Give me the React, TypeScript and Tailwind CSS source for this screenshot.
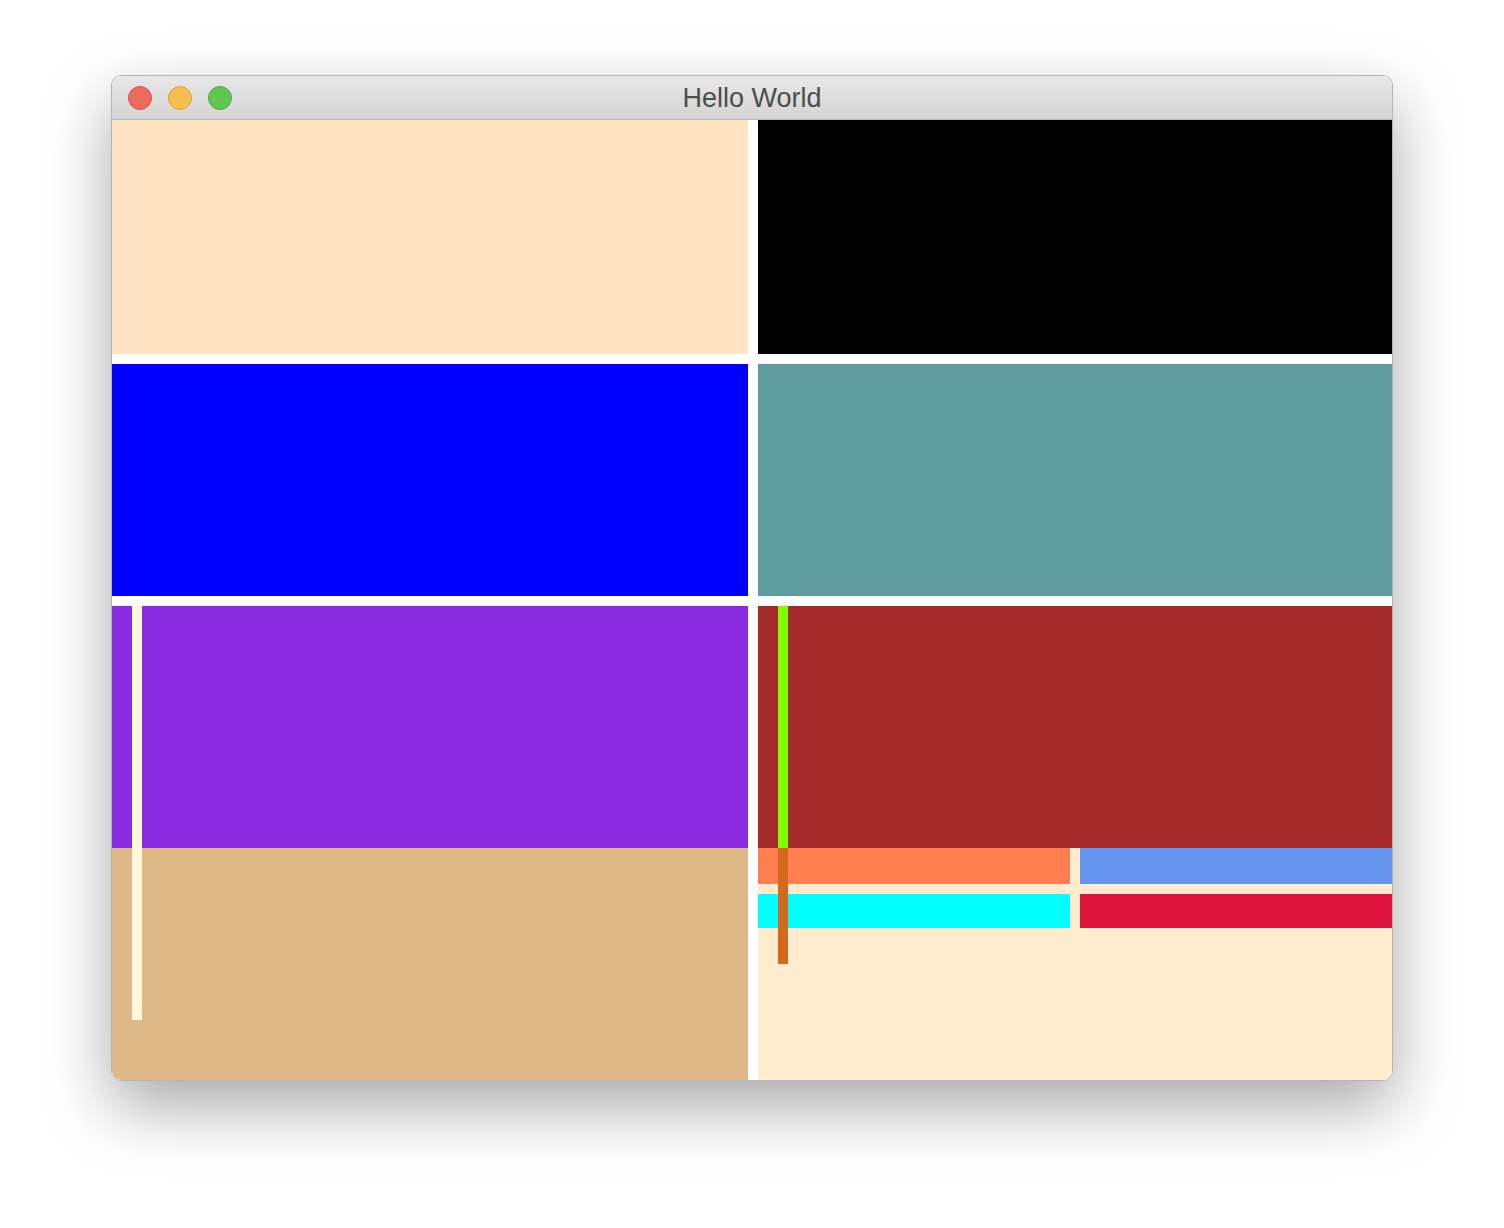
export default function App() {
  return (
    <div className="min-h-screen bg-white pt-[75px] pl-[111px] font-['Liberation_Sans',Arial,sans-serif]">
      <div className="w-[1282px] overflow-hidden rounded-[10px] border border-[#b5b5b5] shadow-[0_26px_64px_rgba(0,0,0,0.34)]">
        {/* title bar */}
        <div className="relative flex h-[44px] items-center border-b border-[#b8b8b8] bg-gradient-to-b from-[#e8e8e8] to-[#d4d4d4]">
          <div className="flex items-center gap-[16px] pl-[16px]">
            <span className="h-[24px] w-[24px] rounded-full border border-[#d9534a] bg-[#ee6a5f]" />
            <span className="h-[24px] w-[24px] rounded-full border border-[#dba33a] bg-[#f6be4f]" />
            <span className="h-[24px] w-[24px] rounded-full border border-[#4ea83f] bg-[#62c655]" />
          </div>
          <div className="absolute inset-0 flex items-center justify-center pt-[2px] text-[27px] text-[#4d4d4d]">
            Hello World
          </div>
        </div>

        {/* content */}
        <div className="flex w-[1280px] flex-col bg-white">
          <div className="flex h-[234px] gap-[10px]">
            <div className="w-[636px] bg-[#ffe4c4]" />
            <div className="w-[634px] bg-black" />
          </div>
          <div className="mt-[10px] flex h-[232px] gap-[10px]">
            <div className="w-[636px] bg-[#0000ff]" />
            <div className="w-[634px] bg-[#5f9ea0]" />
          </div>
          <div className="mt-[10px] flex h-[474px] gap-[10px]">
            <div className="relative flex w-[636px] flex-col">
              <div className="h-[242px] bg-[#8a2be2]" />
              <div className="h-[232px] bg-[#deb887]" />
              <div className="absolute left-[20px] top-0 h-[414px] w-[10px] bg-[#fff8dc]" />
            </div>
            <div className="relative flex w-[634px] flex-col">
              <div className="h-[242px] bg-[#a52a2a]" />
              <div className="flex h-[232px] flex-col gap-[10px] bg-[#ffebcd]">
                <div className="flex h-[36px] gap-[10px]">
                  <div className="w-[312px] bg-[#ff7f50]" />
                  <div className="w-[312px] bg-[#6495ed]" />
                </div>
                <div className="flex h-[34px] gap-[10px]">
                  <div className="w-[312px] bg-[#00ffff]" />
                  <div className="w-[312px] bg-[#dc143c]" />
                </div>
              </div>
              <div className="absolute left-[20px] top-0 h-[242px] w-[10px] bg-[#7fff00]" />
              <div className="absolute left-[20px] top-[242px] h-[116px] w-[10px] bg-[#d2691e]" />
            </div>
          </div>
        </div>
      </div>
    </div>
  );
}
